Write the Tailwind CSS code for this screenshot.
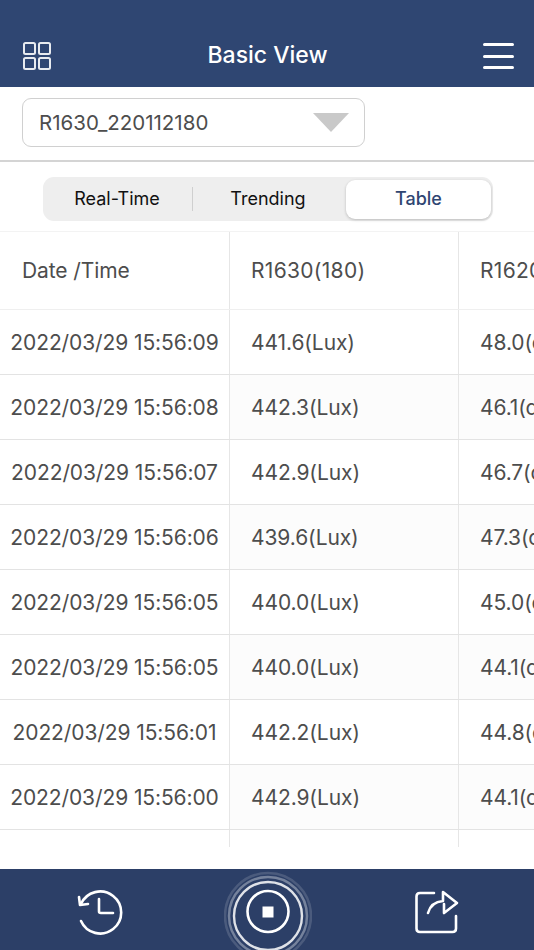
<!DOCTYPE html>
<html>
<head>
<meta charset="utf-8">
<script src="https://cdn.jsdelivr.net/npm/@tailwindcss/browser@4"></script>
</head>
<body class="bg-white">
<div class="w-[534px] h-[950px] flex flex-col overflow-hidden bg-white font-['Inter','Liberation_Sans',sans-serif] text-[#4d4d4d]">
  <header class="h-[87px] shrink-0 bg-[#2f4672] flex items-end justify-between pl-[23px] pr-[20px] pb-[17px] text-white">
    <svg width="28" height="28" viewBox="23 41 28 28" fill="none" stroke="#e8ebf0" stroke-width="2"><rect x="24" y="42" width="11" height="11" rx="1.5"/><rect x="39" y="42" width="11" height="11" rx="1.5"/><rect x="24" y="57" width="11" height="11" rx="1.5"/><rect x="39" y="57" width="11" height="11" rx="1.5"/></svg>
    <h1 class="text-[23px] leading-[28px] font-medium mb-[1px] ml-[1px]">Basic View</h1>
    <svg width="31" height="28" viewBox="483 41 31 28" fill="none" stroke="#fff" stroke-width="3" stroke-linecap="round"><path d="M484.500 43.500H512.500M484.500 55.500H512.500M484.500 66.500H512.500"/></svg>
  </header>
  <div class="h-[75px] shrink-0 border-b-2 border-[#d4d4d4] pl-[22px] pt-[11px]">
    <div class="w-[343px] h-[49px] border-[1.5px] border-[#d0d0d0] rounded-[9px] flex items-center justify-between pl-[16px] pr-[15px] text-[20.500px]">
      <span class="mt-[2px]">R1630_220112180</span>
      <svg width="36" height="19" viewBox="0 0 36 19"><path d="M0 0H36L18 19Z" fill="#c9c9c9"/></svg>
    </div>
  </div>
  <div class="h-[69px] shrink-0 pt-[15px] pl-[43px]">
    <div class="w-[450px] h-[44px] bg-[#eeeeee] rounded-[11px] flex items-center pl-[3px] pr-[2px] text-[18px] font-normal">
      <div class="w-[147px] h-[24px] flex items-center justify-center border-r border-[#cfcfcf] text-[#111111] pr-[4px] pb-[2px]">Real-Time</div>
      <div class="w-[153px] flex items-center justify-center text-[#111111] pr-[3px] pb-[2px]">Trending</div>
      <div class="w-[145px] h-[39px] bg-white rounded-[9px] flex items-center justify-center text-[#2f4672] font-medium shadow-[0_1px_3px_rgba(0,0,0,0.22)] pb-[1px]">Table</div>
    </div>
  </div>
  <div class="h-[616px] shrink-0 overflow-hidden border-t border-[#f3f3f3] text-[21px] tracking-[-0.1px]">
    <div class="grid grid-cols-[230px_229px_229px] h-[78px] w-[688px] border-b border-[#efefef] items-stretch">
      <div class="border-r border-[#e6e6e6] flex items-center pl-[22px]">Date /Time</div>
      <div class="border-r border-[#e6e6e6] flex items-center pl-[21px] tracking-[0.3px]">R1630(180)</div>
      <div class="flex items-center pl-[21px] tracking-[0.3px]">R1620(181)</div>
    </div>
    <div class="grid grid-cols-[230px_229px_229px] h-[65px] w-[688px] border-b border-[#e3e3e3]">
      <div class="border-r border-[#e6e6e6] flex items-center justify-center pt-[2px]">2022/03/29 15:56:09</div>
      <div class="border-r border-[#e6e6e6] flex items-center pl-[21px] pt-[2px]">441.6(Lux)</div>
      <div class="flex items-center pl-[21px] pt-[2px]">48.0(dB)</div>
    </div>
    <div class="grid grid-cols-[230px_229px_229px] h-[65px] w-[688px] border-b border-[#e3e3e3]">
      <div class="border-r border-[#e6e6e6] flex items-center justify-center pt-[2px]">2022/03/29 15:56:08</div>
      <div class="border-r border-[#e6e6e6] flex items-center pl-[21px] pt-[2px] bg-[#fcfcfc]">442.3(Lux)</div>
      <div class="flex items-center pl-[21px] pt-[2px] bg-[#fcfcfc]">46.1(dB)</div>
    </div>
    <div class="grid grid-cols-[230px_229px_229px] h-[65px] w-[688px] border-b border-[#e3e3e3]">
      <div class="border-r border-[#e6e6e6] flex items-center justify-center pt-[2px]">2022/03/29 15:56:07</div>
      <div class="border-r border-[#e6e6e6] flex items-center pl-[21px] pt-[2px]">442.9(Lux)</div>
      <div class="flex items-center pl-[21px] pt-[2px]">46.7(dB)</div>
    </div>
    <div class="grid grid-cols-[230px_229px_229px] h-[65px] w-[688px] border-b border-[#e3e3e3]">
      <div class="border-r border-[#e6e6e6] flex items-center justify-center pt-[2px]">2022/03/29 15:56:06</div>
      <div class="border-r border-[#e6e6e6] flex items-center pl-[21px] pt-[2px] bg-[#fcfcfc]">439.6(Lux)</div>
      <div class="flex items-center pl-[21px] pt-[2px] bg-[#fcfcfc]">47.3(dB)</div>
    </div>
    <div class="grid grid-cols-[230px_229px_229px] h-[65px] w-[688px] border-b border-[#e3e3e3]">
      <div class="border-r border-[#e6e6e6] flex items-center justify-center pt-[2px]">2022/03/29 15:56:05</div>
      <div class="border-r border-[#e6e6e6] flex items-center pl-[21px] pt-[2px]">440.0(Lux)</div>
      <div class="flex items-center pl-[21px] pt-[2px]">45.0(dB)</div>
    </div>
    <div class="grid grid-cols-[230px_229px_229px] h-[65px] w-[688px] border-b border-[#e3e3e3]">
      <div class="border-r border-[#e6e6e6] flex items-center justify-center pt-[2px]">2022/03/29 15:56:05</div>
      <div class="border-r border-[#e6e6e6] flex items-center pl-[21px] pt-[2px] bg-[#fcfcfc]">440.0(Lux)</div>
      <div class="flex items-center pl-[21px] pt-[2px] bg-[#fcfcfc]">44.1(dB)</div>
    </div>
    <div class="grid grid-cols-[230px_229px_229px] h-[65px] w-[688px] border-b border-[#e3e3e3]">
      <div class="border-r border-[#e6e6e6] flex items-center justify-center pt-[2px]">2022/03/29 15:56:01</div>
      <div class="border-r border-[#e6e6e6] flex items-center pl-[21px] pt-[2px]">442.2(Lux)</div>
      <div class="flex items-center pl-[21px] pt-[2px]">44.8(dB)</div>
    </div>
    <div class="grid grid-cols-[230px_229px_229px] h-[65px] w-[688px] border-b border-[#e3e3e3]">
      <div class="border-r border-[#e6e6e6] flex items-center justify-center pt-[2px]">2022/03/29 15:56:00</div>
      <div class="border-r border-[#e6e6e6] flex items-center pl-[21px] pt-[2px] bg-[#fcfcfc]">442.9(Lux)</div>
      <div class="flex items-center pl-[21px] pt-[2px] bg-[#fcfcfc]">44.1(dB)</div>
    </div>
    <div class="grid grid-cols-[230px_229px_229px] h-[17px] w-[688px]">
      <div class="border-r border-[#e6e6e6]"></div>
      <div class="border-r border-[#e6e6e6]"></div>
      <div></div>
    </div>
  </div>
  <div class="flex-1"></div>
  <footer class="h-[81px] shrink-0 bg-[#2c3f67] flex items-start pl-[76px] overflow-hidden">
    <svg width="50" height="81" viewBox="76 869 50 81" fill="none" stroke="#fff" stroke-width="2.600" stroke-linecap="round" stroke-linejoin="round"><path d="M81 921A21 21 0 1 0 81 904"/><path d="M79 897L80 905L88 904"/><path d="M99 899V911.500Q99 913 101 913H113"/></svg>
    <svg class="ml-[98px]" width="88" height="81" viewBox="224 869 88 81" fill="none" stroke="#fff"><circle cx="268" cy="916" r="43" stroke-width="2.500" stroke-opacity=".15"/><circle cx="268" cy="916" r="39" stroke-width="2.500" stroke-opacity=".35"/><circle cx="268" cy="916" r="34" stroke-width="2.400" stroke-opacity=".85"/><circle cx="268" cy="911.500" r="20.500" stroke-width="2.600"/><rect x="262.500" y="906.500" width="11" height="11" fill="#fff" stroke="none"/></svg>
    <svg class="ml-[102px]" width="46" height="81" viewBox="414 869 46 81" fill="none" stroke="#fff" stroke-width="2.600" stroke-linecap="round" stroke-linejoin="round"><path d="M434 893H420Q416.500 893 416.500 896.500V928.500Q416.500 932 420 932H452.500Q456 932 456 928.500V916"/><path d="M428 913Q431 902 443 901V892L457 903L444 913V904"/></svg>
  </footer>
</div>
</body>
</html>
